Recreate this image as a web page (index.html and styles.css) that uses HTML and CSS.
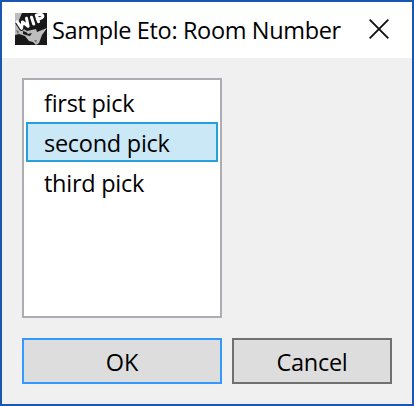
FILE: index.html
```html
<!DOCTYPE html>
<html lang="en">
<head>
<meta charset="utf-8">
<title>Sample Eto: Room Number</title>
<link rel="stylesheet" href="styles.css">
</head>
<body>
<main class="window">
  <header class="titlebar">
    <svg class="app-icon" viewBox="0 0 32 32" aria-hidden="true">
      <path fill="#191919" d="M0 0h32v32H0z"/>
      <path fill="#bdbdbd" d="M0 0h7L4 7l3 8 5 3 9-2 1 3 10-4-5 7-3 8-3 2-3-3-4-1-4-5-6-2-4 1-4-4z"/>
      <path fill="#191919" d="M8 18l3 1 2 2 4-1-2 3-4-1-3-1z"/>
      <path fill="#777" d="M19 27h3l-1 3zM1 17l3 1-1 4z"/>
      <path fill="none" stroke="#191919" stroke-width="5" stroke-linejoin="round" d="M2.3 8.8l4.2 6.5 1-6.4 5 4-1.3-8M16.5 4.5l2.2 6.5M23.5 8.5l-2.2-6.3q5.8-1.8 6.5.5.7 2.4-5.5 3.6"/>
      <path fill="none" stroke="#fff" stroke-width="3" stroke-linejoin="round" stroke-linecap="round" d="M2.3 8.8l4.2 6.5 1-6.4 5.6 4.5-1.6-8.2M16.5 4.3l2.2 6.7M23.5 8.7l-2.2-6.5q5.8-1.8 6.5.5.7 2.4-5.5 3.6"/>
    </svg>
    <h1 class="title">Sample Eto: Room Number</h1>
    <button class="close" aria-label="Close">
      <svg viewBox="0 0 20 20"><path d="M.7.7l18.6 18.6M19.3.7L.7 19.3"/></svg>
    </button>
  </header>
  <section class="content">
    <ul class="list">
      <li class="item">first pick</li>
      <li class="item selected">second pick</li>
      <li class="item">third pick</li>
    </ul>
    <footer class="actions">
      <button class="button ok">OK</button>
      <button class="button cancel">Cancel</button>
    </footer>
  </section>
</main>
</body>
</html>
```
FILE: styles.css
```css
* { box-sizing: border-box; }
body {
  margin: 0;
  font-family: "Open Sans", "Noto Sans", sans-serif;
  font-size: 23.5px;
  color: #000;
}
.window {
  width: 414px;
  height: 406px;
  border: 2px solid #1a56b4;
  background: #f0f0f0;
}
.titlebar {
  display: flex;
  align-items: center;
  height: 56px;
  padding: 0 23px 0 13px;
  background: #fff;
}
.app-icon { width: 32px; height: 32px; margin-bottom: 2px; }
.title {
  margin: 0 0 0 5px;
  font-size: 23.5px;
  font-weight: 400;
  line-height: 32px;
  letter-spacing: -0.35px;
  white-space: nowrap;
}
.close {
  display: flex;
  margin-left: auto;
  margin-bottom: 2px;
  padding: 0;
  border: 0;
  background: none;
}
.close svg { width: 20px; height: 20px; fill: none; stroke: #111; stroke-width: 1.9; }
.content { padding: 20px; }
.list {
  width: 200px;
  height: 240px;
  margin: 0;
  padding: 2px;
  border: 2px solid #abadb3;
  background: #fff;
  list-style: none;
}
.item {
  height: 40px;
  padding-left: 16px;
  border: 2px solid transparent;
  line-height: 38px;
  letter-spacing: -0.27px;
  white-space: nowrap;
}
.selected { background: #cbe8f6; border-color: #26a0da; }
.actions { display: flex; gap: 10px; margin-top: 20px; }
.button {
  height: 46px;
  padding: 2px 0 0;
  border: 2px solid #707070;
  background: #ddd;
  font: inherit;
  color: inherit;
}
.ok { width: 200px; border-color: #3399ff; }
.cancel { width: 160px; letter-spacing: -0.3px; }
```
